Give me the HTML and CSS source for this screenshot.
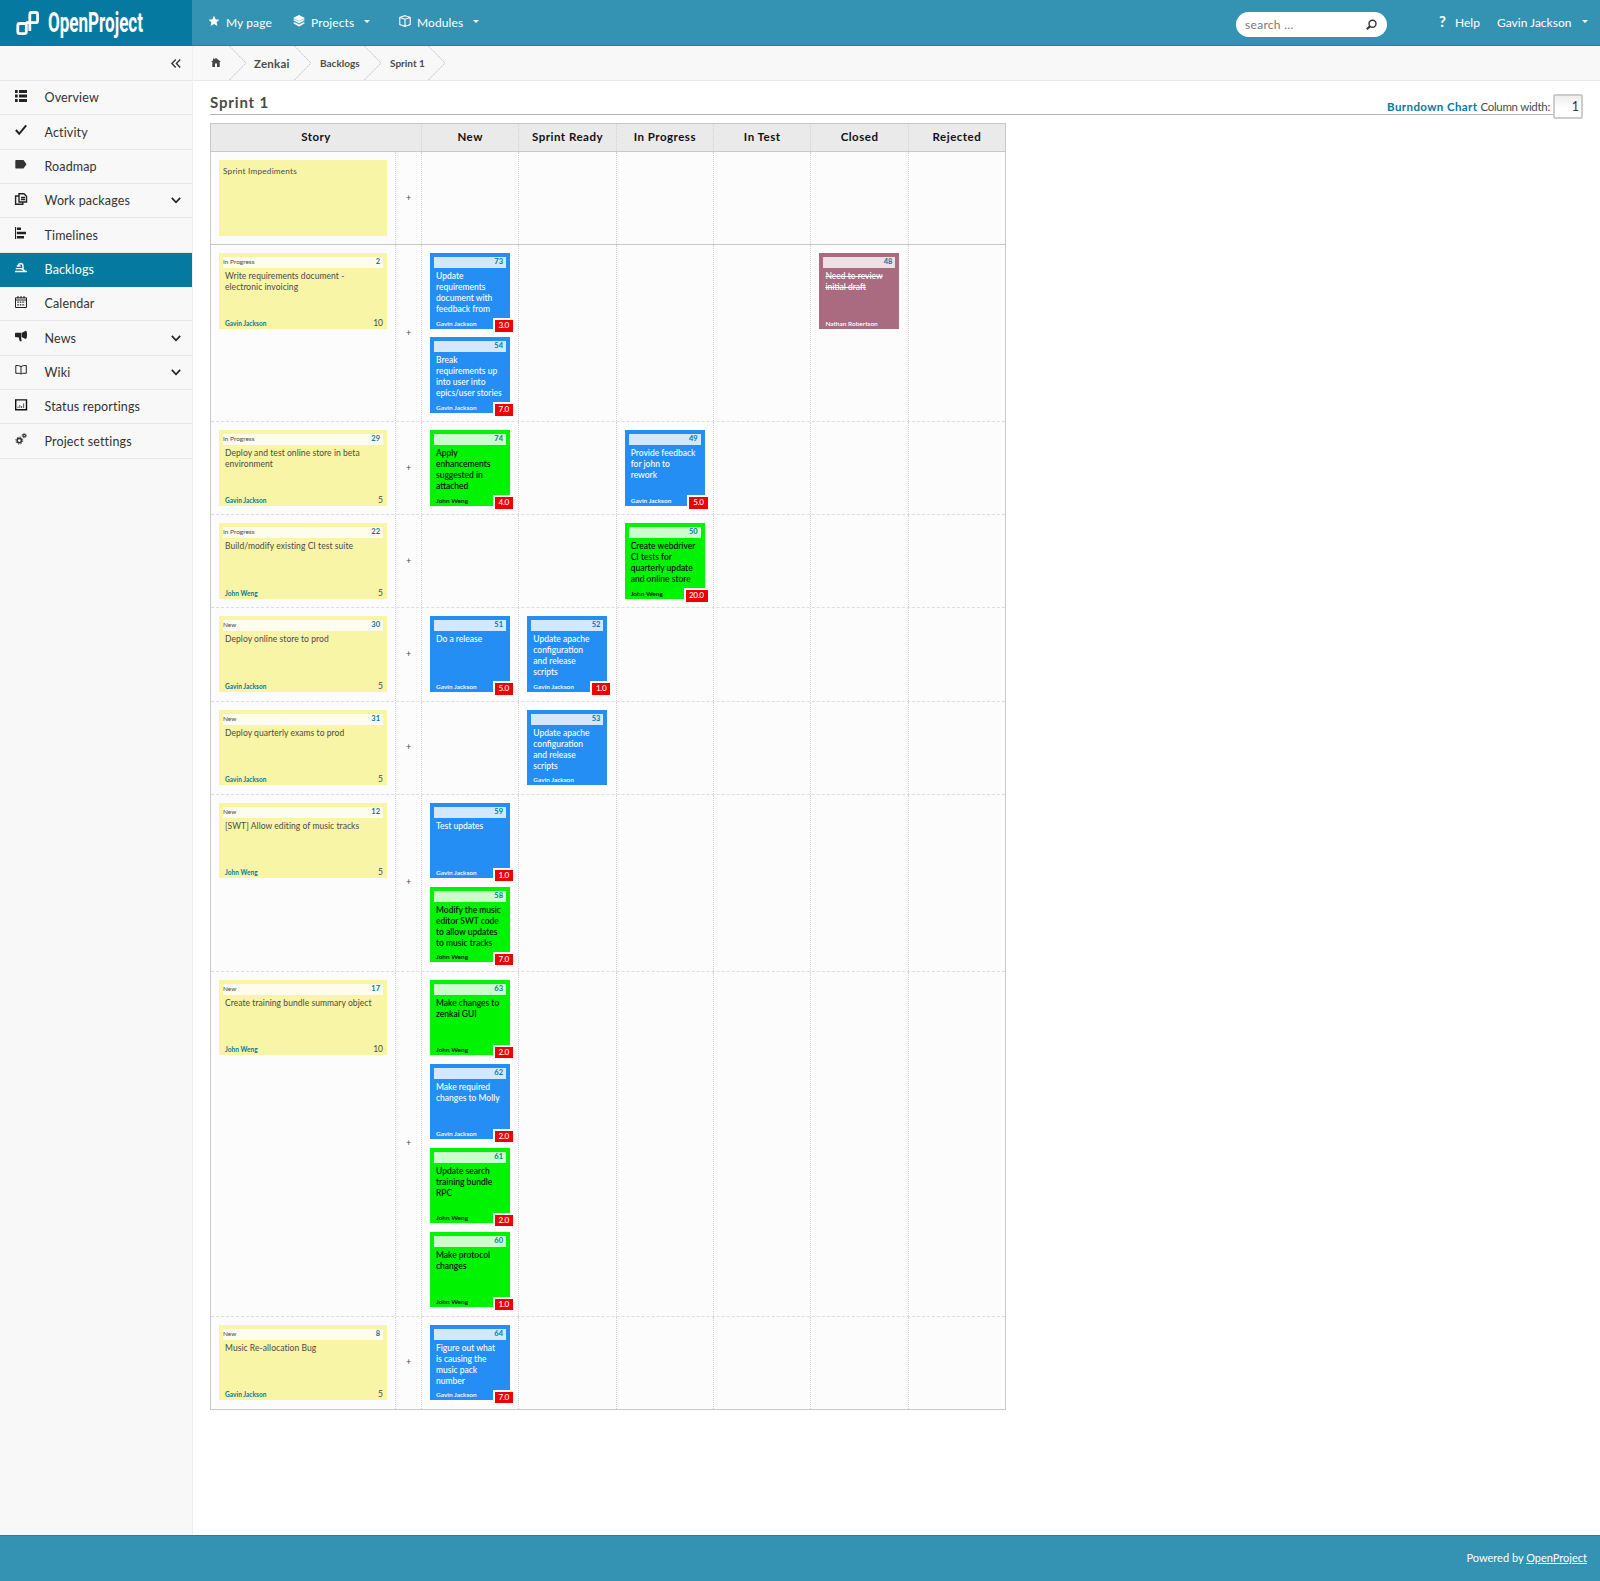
FILE: index.html
```html
<!DOCTYPE html>
<html lang="en">
<head>
<meta charset="utf-8">
<title>Sprint 1 - OpenProject</title>
<link rel="stylesheet" href="styles.css">
</head>
<body>
<header class="top">
  <a class="logo"><svg width="192" height="46" viewBox="0 0 192 46"><g fill="none" stroke="#fff" stroke-width="2.800"><path d="M26.300 23.500H19.800Q17.800 23.500 17.800 25.500V31.800Q17.800 33.700 19.800 33.700H24.300Q26.300 33.700 26.300 31.800V23.500"/><path d="M29.800 31V14.500Q29.800 12.500 31.800 12.500H35.600Q37.600 12.500 37.600 14.500V20.700Q37.600 22.700 35.600 22.700H26"/></g><text class="logo-text" x="48" y="32" textLength="95" lengthAdjust="spacingAndGlyphs">OpenProject</text></svg></a>
  <nav class="nav">
    <a class="nav-item n1"><svg class="ic" viewBox="0 0 12 12"><path fill="#fff" d="M6 .8 7.600 4.300 11.400 4.700 8.600 7.200 9.400 11 6 9 2.600 11 3.400 7.200 .6 4.700 4.400 4.300z"/></svg><span>My page</span></a>
    <a class="nav-item n2"><svg class="ic" viewBox="0 0 12 12"><path fill="#fff" d="M6 0 12 3 6 6 0 3zM0 5l1.600-.7L6 6.500l4.400-2.200L12 5 6 8.500zM0 8l1.600-.8L6 9.500l4.400-2.300L12 8l-6 3.800z"/></svg><span>Projects</span><i class="caret"></i></a>
    <a class="nav-item n3"><svg class="ic" viewBox="0 0 12 12"><path fill="none" stroke="#fff" stroke-width="1.100" d="M6 .7 11.200 2.300V9.500L6 11.300 .8 9.500V2.300zM.8 2.500 6 4.200 11.200 2.500M6 4.200V11"/></svg><span>Modules</span><i class="caret"></i></a>
  </nav>
  <div class="search"><span>search ...</span><svg width="11" height="11" viewBox="0 0 11 11"><g fill="none" stroke="#333" stroke-width="1.400"><circle cx="6.500" cy="4.700" r="3.500"/><path d="M4 7.200 .8 10.200" stroke-width="2"/></g></svg></div>
  <a class="help"><b>?</b><span>Help</span></a>
  <a class="user"><span>Gavin Jackson</span><i class="caret"></i></a>
</header>
<div class="middle">
<aside class="side">
  <div class="toggle"><svg width="10" height="9" viewBox="0 0 10 9"><path fill="none" stroke="#333" stroke-width="1.400" d="M4.700.5.900 4.500l3.800 4M9.200.5 5.400 4.500l3.800 4"/></svg></div>
  <a class="item"><svg class="mi" viewBox="0 0 12 12"><path fill="#222" d="M0 0h2.700v3H0zM4 0h8v3H4zM0 4.500h2.700v3H0zM4 4.500h8v3H4zM0 9h2.700v3H0zM4 9h8v3H4z"/></svg><span>Overview</span></a>
  <a class="item"><svg class="mi" viewBox="0 0 12 12"><path fill="none" stroke="#222" stroke-width="2" d="M.9 6 4.200 9.800 11.200 1.300"/></svg><span>Activity</span></a>
  <a class="item"><svg class="mi" viewBox="0 0 12 12"><path fill="#333" d="M1 2h7.500L11.500 6.200 8.500 10.500H1Q.3 10.500.3 9.800V2.700Q.3 2 1 2z"/></svg><span>Roadmap</span></a>
  <a class="item"><svg class="mi" viewBox="0 0 12 12"><path fill="none" stroke="#222" stroke-width="1.400" d="M4 .7h5l2.500 2.500V9H4zM3.500 3H.6v8.300h7.200V9.500M6 4.500h4M6 6.500h4"/></svg><span>Work packages</span><svg class="chev" viewBox="0 0 10 7"><path d="M.8.9 5 5.300 9.200.9"/></svg></a>
  <a class="item"><svg class="mi" viewBox="0 0 12 12"><path fill="#222" d="M0 0h1v12H0zM1.800.5H6v2.600H1.800zM1.800 4.800H11v2.400H1.800zM1.800 8.900H9v2.600H1.800z"/></svg><span>Timelines</span></a>
  <a class="item active"><svg class="mi" viewBox="0 0 12 12"><path fill="none" stroke="#fff" stroke-width="1.400" d="M0 10.500H11.800M.8 7.600H6.500L10 10M3.300 4.500Q3.600 2.500 5.800 2.500 8 2.600 8 5.200V8M1.800 5H5.500"/></svg><span>Backlogs</span></a>
  <a class="item"><svg class="mi" viewBox="0 0 12 12"><path fill="none" stroke="#222" stroke-width="1" d="M.5 1.800h11v9.700H.5zM.5 4h11M3 0v2.500M6 0v2.500M9 0v2.500"/><path stroke="#222" stroke-width="1.200" stroke-dasharray="1.500 1" d="M2.300 6.200h7.800M2.300 8.800h7.800"/></svg><span>Calendar</span></a>
  <a class="item"><svg class="mi" viewBox="0 0 12 12"><path fill="#222" d="M.8 2.800H6.500V7.200H.8Q0 7.200 0 6.200V3.800Q0 2.800.8 2.800zM7 2.800 10.800.8Q12 .8 12 4.800T10.800 9L7 7.200zM3.500 7H6l.7 4.200H4.800z"/></svg><span>News</span><svg class="chev" viewBox="0 0 10 7"><path d="M.8.9 5 5.300 9.200.9"/></svg></a>
  <a class="item"><svg class="mi" viewBox="0 0 12 12"><path fill="none" stroke="#222" stroke-width="1" d="M6 2.600Q4 1.200.8 1.500V9.300H4.500Q6 9.500 6 10.300 6 9.500 7.500 9.300H11.300V1.500Q8 1.200 6 2.600V10"/></svg><span>Wiki</span><svg class="chev" viewBox="0 0 10 7"><path d="M.8.9 5 5.300 9.200.9"/></svg></a>
  <a class="item"><svg class="mi" viewBox="0 0 12 12"><path fill="none" stroke="#111" stroke-width="1.400" d="M.7.9h10.800v9.800H.7z"/><path stroke="#555" stroke-width="1" d="M3 9V7.500M4.800 9V6M6.600 9V7M8.600 9V4.500"/></svg><span>Status reportings</span></a>
  <a class="item"><svg class="mi" viewBox="0 0 12 12"><g fill="none" stroke="#333"><circle cx="4.300" cy="7.600" r="2.200" stroke-width="1.600"/><circle cx="4.300" cy="7.600" r="3.500" stroke-width="1" stroke-dasharray="1.300 1.450"/><circle cx="9.200" cy="2.600" r="1.300" stroke-width="1.200"/><circle cx="9.200" cy="2.600" r="2.200" stroke-width=".8" stroke-dasharray=".9 .83"/></g></svg><span>Project settings</span></a>
</aside>
<main class="main">
  <div class="crumbs">
    <svg class="home" width="10" height="9" viewBox="0 0 10 9"><path fill="#444" d="M5 0 10 4H8.700V9H6V5.500H4V9H1.300V4H0L2 2.400V.5H3.300V1.400z"/></svg>
    <svg class="sep" viewBox="0 0 18 34"><path d="M.5 0 17 17 .5 34"/></svg>
    <b class="c1">Zenkai</b>
    <svg class="sep" viewBox="0 0 18 34"><path d="M.5 0 17 17 .5 34"/></svg>
    <b class="c2">Backlogs</b>
    <svg class="sep" viewBox="0 0 18 34"><path d="M.5 0 17 17 .5 34"/></svg>
    <b class="c3">Sprint 1</b>
    <svg class="sep" viewBox="0 0 18 34"><path d="M.5 0 17 17 .5 34"/></svg>
  </div>
  <div class="titlebar"><h1>Sprint 1</h1><div class="tools"><b>Burndown Chart</b><span>Column width:</span></div><div class="width">1</div></div>
  <div class="board">
    <div class="row head"><div class="story">Story</div><div>New</div><div>Sprint Ready</div><div>In Progress</div><div>In Test</div><div>Closed</div><div>Rejected</div></div>
    <div class="row imp"><div><div class="note plain">Sprint Impediments</div></div><div class="add">+</div><div></div><div></div><div></div><div></div><div></div><div></div></div>

    <div class="row r2"><div><div class="note"><div class="bar"><span>In Progress</span><b>2</b></div><p>Write requirements document - electronic invoicing</p><div class="foot"><b>Gavin Jackson</b><span>10</span></div></div></div><div class="add">+</div>
      <div><div class="task blue"><div class="bar"><b>73</b></div><p>Update<br>requirements<br>document with<br>feedback from</p><em>Gavin Jackson</em><i class="hrs">3.0</i></div><div class="task blue"><div class="bar"><b>54</b></div><p>Break<br>requirements up<br>into user into<br>epics/user stories</p><em>Gavin Jackson</em><i class="hrs">7.0</i></div></div>
      <div></div><div></div><div></div><div><div class="task mauve"><div class="bar"><b>48</b></div><p>Need to review<br>initial draft</p><em>Nathan Robertson</em></div></div><div></div></div>

    <div class="row"><div><div class="note"><div class="bar"><span>In Progress</span><b>29</b></div><p>Deploy and test online store in beta environment</p><div class="foot"><b>Gavin Jackson</b><span>5</span></div></div></div><div class="add">+</div>
      <div><div class="task green"><div class="bar"><b>74</b></div><p>Apply<br>enhancements<br>suggested in<br>attached</p><em>John Weng</em><i class="hrs">4.0</i></div></div>
      <div></div><div><div class="task blue"><div class="bar"><b>49</b></div><p>Provide feedback<br>for john to<br>rework</p><em>Gavin Jackson</em><i class="hrs">5.0</i></div></div><div></div><div></div><div></div></div>

    <div class="row"><div><div class="note"><div class="bar"><span>In Progress</span><b>22</b></div><p>Build/modify existing CI test suite</p><div class="foot"><b>John Weng</b><span>5</span></div></div></div><div class="add">+</div>
      <div></div><div></div><div><div class="task green"><div class="bar"><b>50</b></div><p>Create webdriver<br>CI tests for<br>quarterly update<br>and online store</p><em>John Weng</em><i class="hrs wide">20.0</i></div></div><div></div><div></div><div></div></div>

    <div class="row"><div><div class="note"><div class="bar"><span>New</span><b>30</b></div><p>Deploy online store to prod</p><div class="foot"><b>Gavin Jackson</b><span>5</span></div></div></div><div class="add">+</div>
      <div><div class="task blue"><div class="bar"><b>51</b></div><p>Do a release</p><em>Gavin Jackson</em><i class="hrs">5.0</i></div></div>
      <div><div class="task blue"><div class="bar"><b>52</b></div><p>Update apache<br>configuration<br>and release<br>scripts</p><em>Gavin Jackson</em><i class="hrs">1.0</i></div></div><div></div><div></div><div></div><div></div></div>

    <div class="row"><div><div class="note"><div class="bar"><span>New</span><b>31</b></div><p>Deploy quarterly exams to prod</p><div class="foot"><b>Gavin Jackson</b><span>5</span></div></div></div><div class="add">+</div>
      <div></div><div><div class="task blue"><div class="bar"><b>53</b></div><p>Update apache<br>configuration<br>and release<br>scripts</p><em>Gavin Jackson</em></div></div><div></div><div></div><div></div><div></div></div>

    <div class="row r2"><div><div class="note"><div class="bar"><span>New</span><b>12</b></div><p>[SWT] Allow editing of music tracks</p><div class="foot"><b>John Weng</b><span>5</span></div></div></div><div class="add">+</div>
      <div><div class="task blue"><div class="bar"><b>59</b></div><p>Test updates</p><em>Gavin Jackson</em><i class="hrs">1.0</i></div><div class="task green"><div class="bar"><b>58</b></div><p>Modify the music<br>editor SWT code<br>to allow updates<br>to music tracks</p><em>John Weng</em><i class="hrs">7.0</i></div></div>
      <div></div><div></div><div></div><div></div><div></div></div>

    <div class="row r4"><div><div class="note"><div class="bar"><span>New</span><b>17</b></div><p>Create training bundle summary object</p><div class="foot"><b>John Weng</b><span>10</span></div></div></div><div class="add">+</div>
      <div><div class="task green"><div class="bar"><b>63</b></div><p>Make changes to<br>zenkai GUI</p><em>John Weng</em><i class="hrs">2.0</i></div><div class="task blue"><div class="bar"><b>62</b></div><p>Make required<br>changes to Molly</p><em>Gavin Jackson</em><i class="hrs">2.0</i></div><div class="task green"><div class="bar"><b>61</b></div><p>Update search<br>training bundle<br>RPC</p><em>John Weng</em><i class="hrs">2.0</i></div><div class="task green"><div class="bar"><b>60</b></div><p>Make protocol<br>changes</p><em>John Weng</em><i class="hrs">1.0</i></div></div>
      <div></div><div></div><div></div><div></div><div></div></div>

    <div class="row last"><div><div class="note"><div class="bar"><span>New</span><b>8</b></div><p>Music Re-allocation Bug</p><div class="foot"><b>Gavin Jackson</b><span>5</span></div></div></div><div class="add">+</div>
      <div><div class="task blue"><div class="bar"><b>64</b></div><p>Figure out what<br>is causing the<br>music pack<br>number</p><em>Gavin Jackson</em><i class="hrs">7.0</i></div></div>
      <div></div><div></div><div></div><div></div><div></div></div>
  </div>
</main>
</div>
<footer class="bottom">Powered by&nbsp;<u>OpenProject</u></footer>
</body>
</html>
```

FILE: styles.css
```css
* { box-sizing: border-box; }
body { margin: 0; height: 1581px; display: flex; flex-direction: column; font: 12px Lato, sans-serif; color: #4b4b4b; background: #fff; }
svg { display: block; flex: none; overflow: visible; }
h1, p { margin: 0; }

.top { height: 46px; flex: none; display: flex; background: #3493b3; border-bottom: 1px solid #1b82a6; color: #fff; line-height: 15px; }
.logo { width: 192px; height: 46px; background: #05799f; }
.logo-text { font: 700 27px Roboto, sans-serif; fill: #fff; }
.nav { display: flex; flex: 1; padding: 15px 0 0 16px; letter-spacing: .1px; }
.nav-item { display: flex; height: 15px; }
.n1 { width: 85px; }
.n2 { width: 106px; }
.ic { width: 12px; height: 12px; margin-right: 6px; }
.nav-item .caret { margin-left: 10px; }
.caret { width: 0; height: 0; border: 3.500px solid transparent; border-top-color: #fff; border-bottom: 0; margin-top: 5px; }
.search { width: 151px; height: 25px; margin: 12px 52px 0 0; border-radius: 13px; background: #fff; color: #777; display: flex; justify-content: space-between; align-items: center; padding: 0 10px 0 9px; font-size: 12px; letter-spacing: .3px; }
.help { display: flex; padding-top: 15px; width: 58px; }
.help b { width: 16px; font-size: 15px; line-height: 12px; }
.user { display: flex; width: 103px; padding: 15px 12px 0 0; justify-content: space-between; }

.middle { flex: 1; display: flex; min-height: 0; }
.side { width: 193px; background: #f8f8f8; border-right: 1px solid #eee; flex: none; }
.toggle { height: 35px; display: flex; justify-content: flex-end; align-items: center; padding-right: 11px; border-bottom: 1px solid #e5e5e5; }
.item { height: 34.35px; display: flex; align-items: center; padding: 0 11px 0 15px; border-bottom: 1px solid #e5e5e5; font-size: 12.5px; letter-spacing: .15px; color: #333; }
.item span { flex: 1; }
.mi { width: 12px; height: 12px; margin: 0 17.500px 4px 0; }
.chev { width: 10px; height: 7px; fill: none; stroke: #222; stroke-width: 1.7; }
.active { background: #05799f; color: #fff; border-color: #05799f; }

.main { flex: 1; }
.crumbs { height: 35px; background: #f8f8f8; border-bottom: 1px solid #e9e9e9; display: flex; align-items: center; padding-left: 18px; font-size: 10px; }
.home { margin: 0 8px 2px 0; }
.sep { width: 18px; height: 34px; fill: none; stroke: #bbb; stroke-width: 1; stroke-dasharray: 1.400 .9; }
.c1 { width: 47px; padding-left: 7px; font-size: 11.500px; letter-spacing: .25px; }
.c2 { width: 52px; padding-left: 8px; }
.c3 { width: 46px; padding-left: 8px; }

.titlebar { margin: 13px 17px 0 17px; height: 25px; display: flex; align-items: flex-start; }
.titlebar h1 { flex: 1; height: 21px; border-bottom: 1px solid #b5b5b5; font-size: 15px; line-height: 16px; letter-spacing: .85px; color: #4b4b4b; }
.tools { height: 21px; border-bottom: 1px solid #b5b5b5; line-height: 26px; font-size: 11.500px; display: flex; gap: 3px; padding-right: 3px; white-space: nowrap; }
.tools b { color: #05799f; letter-spacing: .4px; }
.tools span { letter-spacing: -.3px; }
.width { width: 30px; height: 25px; border: 2px solid #ccc; border-radius: 2px; background: linear-gradient(#eee, #fff 60%); text-align: right; line-height: 22px; padding-right: 2px; font-size: 12.500px; color: #333; }

.board { margin: 4px 0 0 17px; width: 796px; border: 1px solid #c8c8c8; background: #fcfcfc; }
.row { display: grid; grid-template-columns: 184px 26px repeat(6, 97.350px); height: 93.150px; border-bottom: 1px dashed #ddd; }
.row > div { border-left: 1px dotted #d2d2d2; padding: 8px 8px 0 8px; }
.row > div:first-child { border-left: 0; }
.row.head { height: 28px; background: #eaeaea; border-bottom: 1px solid #c8c8c8; }
.row.head > div { padding: 4px 0 0; line-height: 17px; text-align: center; font-weight: bold; font-size: 11.500px; letter-spacing: .5px; color: #111; }
.row.head .story { grid-column: span 2; }
.row.imp { border-bottom: 1px solid #c8c8c8; }
.row.r2 { height: 177px; }
.row.r4 { height: 345px; }
.row.last { border-bottom: 0; height: 92px; }
.row > .add { padding: 0 0 2px; display: flex; align-items: center; justify-content: center; font-size: 9px; }
.note { width: 168px; height: 75.500px; background: #f8f5a6; padding: 4px 4px 0 4px; display: flex; flex-direction: column; font-size: 8.500px; line-height: 11px; }
.note.plain { padding-top: 6px; font-size: 8.200px; letter-spacing: .23px; }
.bar { height: 11px; flex: none; background: rgba(255,255,255,.8); display: flex; justify-content: space-between; line-height: 9px; font-size: 6.500px; }
.bar b { color: #05799f; font-size: 7.500px; margin-left: auto; padding-right: 3px; }
.note p { padding: 3px 0 0 2px; flex: 1; font-size: 8.500px; letter-spacing: .06px; }
.foot { display: flex; justify-content: space-between; padding-left: 2px; }
.foot b { font-size: 6.500px; color: #05799f; letter-spacing: .04px; }
.foot span { font-size: 8.500px; }
.task { position: relative; width: 80px; height: 75.500px; margin-bottom: 8.500px; padding: 4px 4px 0; display: flex; flex-direction: column; line-height: 11px; font-size: 8.500px; white-space: nowrap; font-weight: 500; }
.blue { background: #248ef5; color: #fff; }
.green { background: #00f300; color: #000; }
.mauve { background: #aa6b80; color: #fff; }
.mauve p { text-decoration: line-through; }
.task p { padding: 3px 2px 0; flex: 1; }
.task em { font-style: normal; font-size: 6.500px; font-weight: 600; padding-left: 2px; }
.hrs { position: absolute; right: -3px; bottom: -3px; width: 20.500px; height: 13.500px; background: #ee0000; border: solid #fcfcfc; border-width: 2px 0 0 2px; color: #fff; font-style: normal; font-size: 8.200px; line-height: 10px; text-align: right; padding-right: 4px; letter-spacing: -.35px; }
.wide { width: 24px; }

.bottom { height: 46px; flex: none; background: #3493b3; border-top: 1px solid #1b82a6; color: #fff; display: flex; align-items: center; justify-content: flex-end; padding: 0 13px 2px 0; font-size: 11px; }
```
